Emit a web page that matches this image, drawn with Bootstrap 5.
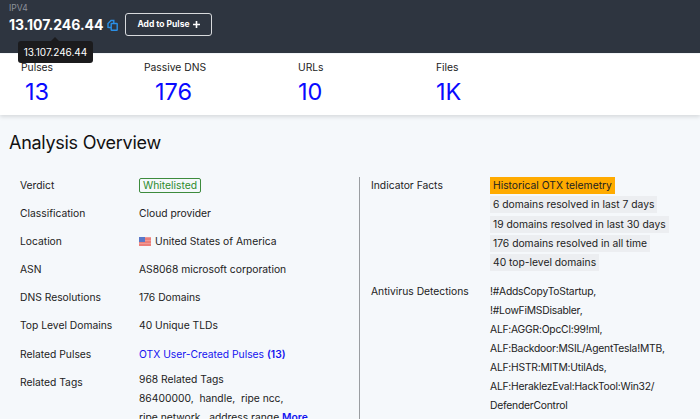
<!doctype html>
<html lang="en"><head><meta charset="utf-8"><title>IPv4 13.107.246.44</title>
<link href="https://cdn.jsdelivr.net/npm/bootstrap@5.3.0/dist/css/bootstrap.min.css" rel="stylesheet">
<style>
html,body{height:419px;overflow:hidden}
body{background:#f5f8fb;font-family:"Inter","Liberation Sans",sans-serif;color:#222;font-size:10.3px}
.topbar{height:53px;background:#2e3540;padding:0 9px;position:relative}
.ipv-label{font-size:8.5px;color:#8d929a;line-height:10px;padding-top:3px}
.ipv-addr{font-size:14px;font-weight:700;color:#fff;line-height:20px;letter-spacing:-.03px}
.pulse-btn{height:23px;width:87px;margin-left:7px;border:1px solid #d8dadd;border-radius:3px;color:#fff;font-size:8.5px;font-weight:700;background:transparent;padding:0}
.tip{position:absolute;left:18px;top:41px;width:75px;height:22px;background:#1b1b1d;color:#fff;border-radius:3px;font-size:10px;line-height:22px;text-align:center;z-index:3}
.tip::before{content:"";position:absolute;left:33px;top:-4px;border:4px solid transparent;border-top:0;border-bottom-color:#1b1b1d}
.stats{height:61px;background:#fff;box-shadow:0 2px 4px rgba(0,0,0,.12);margin-top:1px;padding-left:21px}
.stat{width:123px}.stat-wide{width:154px}.stat-mid{width:138px}
.stat-label{font-size:10.3px;line-height:14px;padding-top:6px;color:#222}
.stat-num{font-size:23.5px;line-height:30px;color:#0a0aff;font-weight:400;padding-top:3px}
.stat-num.c1{padding-left:4px}
.stat-num.c2{padding-left:11px}
.ov-title{font-size:18px;letter-spacing:-.28px;font-weight:400;color:#111;margin:0;padding:16px 0 0 9px;line-height:24px}
.ov-cols{margin-top:22px}
.ov-left{width:359px;padding:0 0 0 20px;height:300px}
.ov-right{border-left:1px solid #9a9da1;padding-left:11px;flex:1;height:300px}
.ov-row{display:flex;min-height:28.1px}
.ov-key{width:119px;flex:none;line-height:14px;padding-top:1px}
.ov-val{line-height:14px;padding-top:1px}
.white-tag{display:inline-block;border:1px solid #3d8b3d;border-radius:2px;color:#2e8b2e;padding:0 3px;line-height:13px}
.flag{display:inline-block;vertical-align:-1px;margin-right:4px}
.ov-link{color:#1414f0;text-decoration:none}
.ov-link b{font-weight:600}
.taglines div{line-height:19px}
.taglines{margin-top:-5px}
.fact{display:table;background:#eceef1;padding:0 3px;line-height:17px;margin-bottom:2.3px}
.fact.hot{background:#ffab00}
.ov-next{margin-top:10px}
.av div{line-height:19px;letter-spacing:-.22px}
.av{margin-top:-1px}
</style></head><body>
<div class="topbar">
  <div class="ipv-label">IPV4</div>
  <div class="d-flex align-items-center">
    <span class="ipv-addr">13.107.246.44</span>
    <svg class="ms-1" width="11" height="12" viewBox="0 0 11 12" fill="none" stroke="#2b8fe6" stroke-width="1.4"><path d="M1 9V4.500L4 1.500h2.800V8.500H1.500"/><rect x="4.200" y="4.500" width="6" height="6.800" rx=".5" fill="#2e3540"/></svg>
    <button type="button" class="btn pulse-btn d-flex align-items-center justify-content-center gap-1">Add to Pulse <svg width="7" height="7" viewBox="0 0 7 7"><path d="M3.500 0v7M0 3.500h7" stroke="#fff" stroke-width="1.600"/></svg></button>
  </div>
  <div class="tip">13.107.246.44</div>
</div>
<div class="stats d-flex">
  <div class="stat"><div class="stat-label">Pulses</div><div class="stat-num c1">13</div></div>
  <div class="stat-wide"><div class="stat-label">Passive DNS</div><div class="stat-num c2">176</div></div>
  <div class="stat-mid"><div class="stat-label">URLs</div><div class="stat-num">10</div></div>
  <div class="stat"><div class="stat-label">Files</div><div class="stat-num">1K</div></div>
</div>
<h2 class="ov-title">Analysis Overview</h2>
<div class="d-flex ov-cols">
  <div class="ov-left">
    <div class="ov-row"><div class="ov-key">Verdict</div><div class="ov-val"><span class="white-tag">Whitelisted</span></div></div>
    <div class="ov-row"><div class="ov-key">Classification</div><div class="ov-val">Cloud provider</div></div>
    <div class="ov-row"><div class="ov-key">Location</div><div class="ov-val"><svg class="flag" width="12" height="9" viewBox="0 0 12 9"><rect width="12" height="9" fill="#f09a96"/><path d="M0 2h12M0 5h12M0 8h12" stroke="#e8645e" stroke-width="1"/><rect width="6" height="5" fill="#5a78c8"/></svg>United States of America</div></div>
    <div class="ov-row"><div class="ov-key">ASN</div><div class="ov-val">AS8068 microsoft corporation</div></div>
    <div class="ov-row"><div class="ov-key">DNS Resolutions</div><div class="ov-val">176 Domains</div></div>
    <div class="ov-row"><div class="ov-key">Top Level Domains</div><div class="ov-val">40 Unique TLDs</div></div>
    <div class="ov-row"><div class="ov-key">Related Pulses</div><div class="ov-val"><a class="ov-link" href="#">OTX User-Created Pulses <b>(13)</b></a></div></div>
    <div class="ov-row"><div class="ov-key">Related Tags</div><div class="ov-val taglines"><div>968 Related Tags</div><div>86400000, &nbsp;handle, &nbsp;ripe ncc,</div><div>ripe network, &nbsp;address range <a class="ov-link" href="#"><b>More</b></a></div></div></div>
  </div>
  <div class="ov-right">
    <div class="ov-row"><div class="ov-key">Indicator Facts</div><div>
      <div class="fact hot">Historical OTX telemetry</div>
      <div class="fact">6 domains resolved in last 7 days</div>
      <div class="fact">19 domains resolved in last 30 days</div>
      <div class="fact">176 domains resolved in all time</div>
      <div class="fact">40 top-level domains</div>
    </div></div>
    <div class="ov-row ov-next"><div class="ov-key">Antivirus Detections</div><div class="av">
      <div>!#AddsCopyToStartup,</div><div>!#LowFiMSDisabler,</div><div>ALF:AGGR:OpcCl:99!ml,</div><div>ALF:Backdoor:MSIL/AgentTesla!MTB,</div><div>ALF:HSTR:MITM:UtilAds,</div><div>ALF:HeraklezEval:HackTool:Win32/<br>DefenderControl</div>
    </div></div>
  </div>
</div>
<script src="https://cdn.jsdelivr.net/npm/bootstrap@5.3.0/dist/js/bootstrap.bundle.min.js"></script>
</body></html>
